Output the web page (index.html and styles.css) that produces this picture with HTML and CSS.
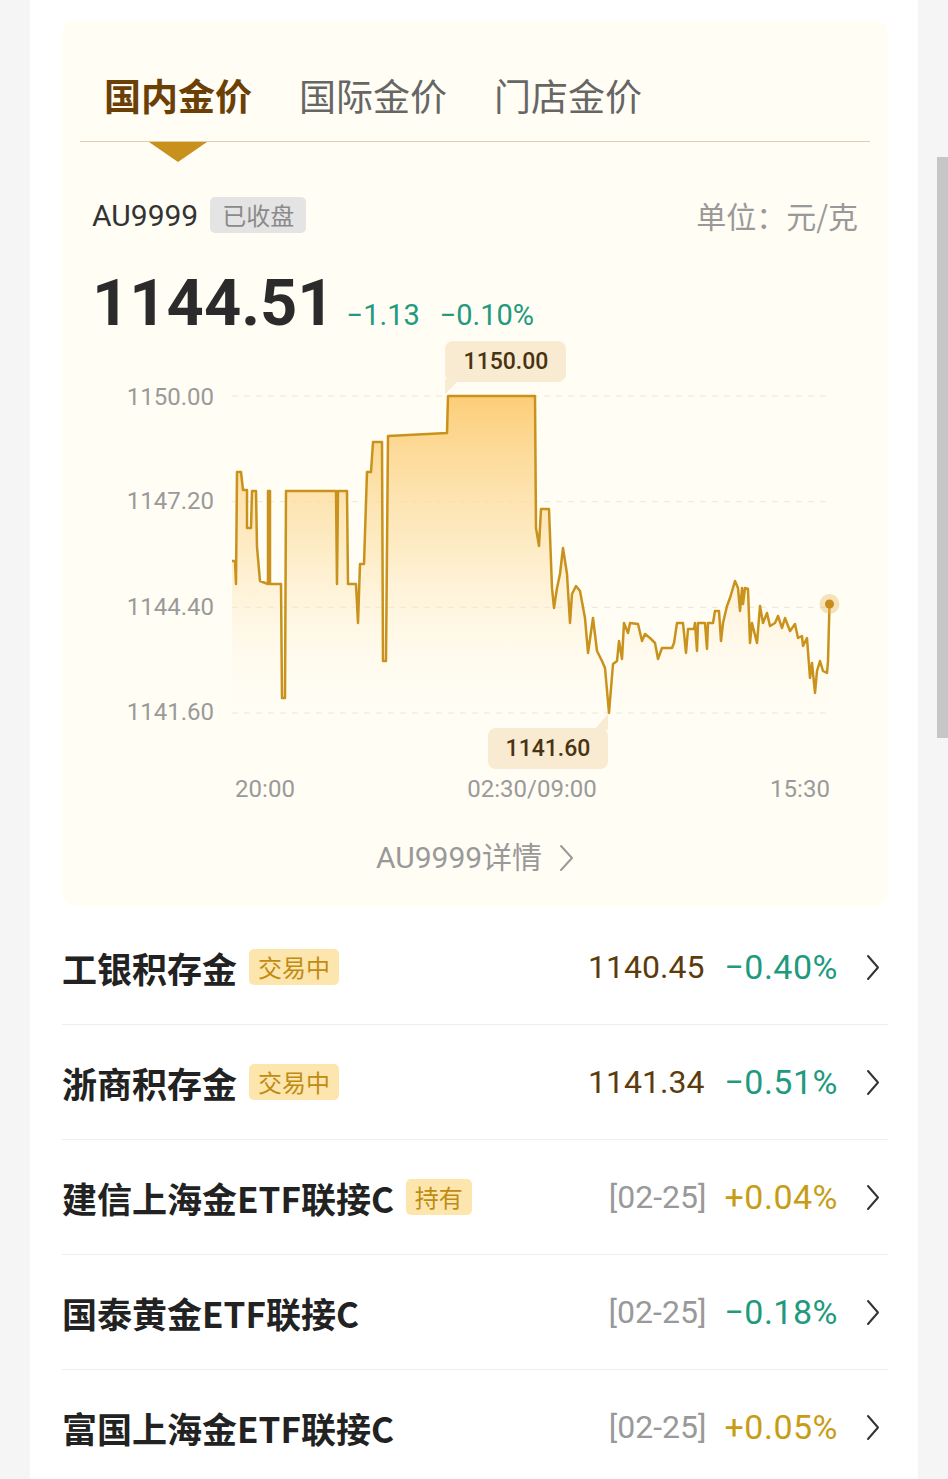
FILE: index.html
```html
<!DOCTYPE html>
<html lang="zh-CN">
<head>
    <meta charset="UTF-8">
    <meta name="viewport" content="width=device-width, initial-scale=1.0">
    <title>金价</title>
    <link rel="stylesheet" href="styles.css">
</head>
<body>
    <div class="scrollbar"></div>
    <div class="page">
        <section class="gold-panel">
            <div class="tabs">
                <span class="tab active">国内金价</span>
                <span class="tab">国际金价</span>
                <span class="tab">门店金价</span>
            </div>

            <div class="quote-head">
                <div class="quote-name">AU9999<span class="tag tag-closed">已收盘</span></div>
                <div class="unit">单位：元/克</div>
            </div>

            <div class="quote-price">
                <span class="price">1144.51</span>
                <span class="change">−1.13</span>
                <span class="change">−0.10%</span>
            </div>

            <!-- 分时图 -->
            <svg class="chart" viewBox="62 335 826 475">
                <defs>
                    <linearGradient id="area" x1="0" y1="395" x2="0" y2="712" gradientUnits="userSpaceOnUse">
                        <stop offset="0" stop-color="#fccb72" stop-opacity="0.95"/>
                        <stop offset="0.5" stop-color="#fde2ab" stop-opacity="0.6"/>
                        <stop offset="1" stop-color="#fff8ea" stop-opacity="0"/>
                    </linearGradient>
                </defs>

                <g class="grid">
                    <line x1="232" y1="395" x2="830" y2="395"/>
                    <line x1="232" y1="500.7" x2="830" y2="500.7"/>
                    <line x1="232" y1="606.3" x2="830" y2="606.3"/>
                    <line x1="232" y1="712" x2="830" y2="712"/>
                </g>

                <g class="axis-label">
                    <text x="214" y="403.5" text-anchor="end">1150.00</text>
                    <text x="214" y="507.5" text-anchor="end">1147.20</text>
                    <text x="214" y="613.5" text-anchor="end">1144.40</text>
                    <text x="214" y="718.5" text-anchor="end">1141.60</text>
                    <text x="265" y="796" text-anchor="middle">20:00</text>
                    <text x="532" y="796" text-anchor="middle">02:30/09:00</text>
                    <text x="800" y="796" text-anchor="middle">15:30</text>
                </g>

                <polygon class="area" points="232,560 235,560 236,583 237,471 241,471 243,489 247,489 247,527 251,527 252,490 256,490 257,546 260,580 268,583 268,490 270,490 270,583 281,583 282,697 285,697 286,490 336,490 337,583 338,490 347,490 348,583 356,583 358,622 360,563 364,563 367,471 371,471 373,441 382,441 383,660 386,660 388,435 447,432 448,395 535,395 536,527 539,545 541,508 549,508 552,587 554,607 557,587 560,573 563,547 567,573 570,622 572,593 576,585 580,590 585,617 588,652 593,617 597,650 602,660 605,667 609,712 613,663 617,660 619,640 622,658 624,622 628,632 630,622 638,623 642,640 645,633 650,637 655,642 658,658 662,647 672,647 674,642 677,622 683,622 686,652 688,628 694,628 695,622 697,650 698,622 705,622 707,648 708,622 713,622 715,610 719,610 721,640 723,622 727,605 730,597 735,580 738,587 740,610 742,587 743,603 745,587 748,588 750,642 752,622 757,642 760,605 763,622 767,612 770,625 775,622 778,615 782,627 785,617 790,630 795,623 798,637 802,635 803,645 807,637 810,677 812,662 815,692 817,670 820,660 823,670 827,672 828,660 829.5,603 829.5,712 232,712"/>
                <polyline class="line" points="232,560 235,560 236,583 237,471 241,471 243,489 247,489 247,527 251,527 252,490 256,490 257,546 260,580 268,583 268,490 270,490 270,583 281,583 282,697 285,697 286,490 336,490 337,583 338,490 347,490 348,583 356,583 358,622 360,563 364,563 367,471 371,471 373,441 382,441 383,660 386,660 388,435 447,432 448,395 535,395 536,527 539,545 541,508 549,508 552,587 554,607 557,587 560,573 563,547 567,573 570,622 572,593 576,585 580,590 585,617 588,652 593,617 597,650 602,660 605,667 609,712 613,663 617,660 619,640 622,658 624,622 628,632 630,622 638,623 642,640 645,633 650,637 655,642 658,658 662,647 672,647 674,642 677,622 683,622 686,652 688,628 694,628 695,622 697,650 698,622 705,622 707,648 708,622 713,622 715,610 719,610 721,640 723,622 727,605 730,597 735,580 738,587 740,610 742,587 743,603 745,587 748,588 750,642 752,622 757,642 760,605 763,622 767,612 770,625 775,622 778,615 782,627 785,617 790,630 795,623 798,637 802,635 803,645 807,637 810,677 812,662 815,692 817,670 820,660 823,670 827,672 828,660 829.5,603"/>

                <circle class="dot-halo" cx="829.5" cy="603" r="10"/>
                <circle class="dot" cx="829.5" cy="603" r="4.5"/>

                <!-- 最高 / 最低 提示 -->
                <g class="tip">
                    <path d="M445 378 L445 393 L458 380 Z"/>
                    <rect x="445" y="340" width="121" height="41" rx="8"/>
                    <text x="506" y="368" text-anchor="middle">1150.00</text>
                </g>
                <g class="tip">
                    <path d="M608 729 L608 713 L595 728 Z"/>
                    <rect x="488" y="727" width="120" height="41" rx="8"/>
                    <text x="548" y="755" text-anchor="middle">1141.60</text>
                </g>
            </svg>

            <div class="detail-link">
                <span>AU9999详情</span>
                <svg class="detail-arrow" viewBox="0 0 15 28"><path d="M2 2 L13 14 L2 26"/></svg>
            </div>
        </section>

        <ul class="fund-list">
            <li class="fund-row">
                <div class="fund-name">工银积存金<span class="tag tag-trading">交易中</span></div>
                <div class="fund-quote">
                    <span class="fund-value">1140.45</span>
                    <span class="pct down">−0.40%</span>
                    <svg class="chevron" viewBox="0 0 14 27"><path d="M2 2 L12 13.5 L2 25"/></svg>
                </div>
            </li>
            <li class="fund-row">
                <div class="fund-name">浙商积存金<span class="tag tag-trading">交易中</span></div>
                <div class="fund-quote">
                    <span class="fund-value">1141.34</span>
                    <span class="pct down">−0.51%</span>
                    <svg class="chevron" viewBox="0 0 14 27"><path d="M2 2 L12 13.5 L2 25"/></svg>
                </div>
            </li>
            <li class="fund-row">
                <div class="fund-name">建信上海金ETF联接C<span class="tag tag-trading">持有</span></div>
                <div class="fund-quote">
                    <span class="fund-date">[02-25]</span>
                    <span class="pct up">+0.04%</span>
                    <svg class="chevron" viewBox="0 0 14 27"><path d="M2 2 L12 13.5 L2 25"/></svg>
                </div>
            </li>
            <li class="fund-row">
                <div class="fund-name">国泰黄金ETF联接C</div>
                <div class="fund-quote">
                    <span class="fund-date">[02-25]</span>
                    <span class="pct down">−0.18%</span>
                    <svg class="chevron" viewBox="0 0 14 27"><path d="M2 2 L12 13.5 L2 25"/></svg>
                </div>
            </li>
            <li class="fund-row">
                <div class="fund-name">富国上海金ETF联接C</div>
                <div class="fund-quote">
                    <span class="fund-date">[02-25]</span>
                    <span class="pct up">+0.05%</span>
                    <svg class="chevron" viewBox="0 0 14 27"><path d="M2 2 L12 13.5 L2 25"/></svg>
                </div>
            </li>
        </ul>
    </div>
</body>
</html>
```

FILE: styles.css
```css
body {
    margin: 0;
    background-color: #f5f5f5;
    font-family: Roboto, "Noto Sans CJK SC", sans-serif;
}

.page {
    width: 888px;
    min-height: 1479px;
    margin-left: 30px;
    padding: 20px 30px 0 32px;
    box-sizing: border-box;
    background: #fff;
}

.scrollbar {
    position: fixed;
    top: 157px;
    right: 0;
    width: 11px;
    height: 581px;
    background: #c6c6c6;
}

/* 金价面板 */
.gold-panel {
    background: #fffdf4;
    border-radius: 14px;
    padding: 0 30px 28px;
}

.tabs {
    display: flex;
    gap: 47px;
    margin: 0 -12px;
    padding: 53px 0 24px 24px;
    border-bottom: 1px solid #dccfab;
}

.tab {
    position: relative;
    font-family: "Noto Sans CJK SC", sans-serif;
    font-size: 37px;
    line-height: 44px;
    color: #666;
}

.tab.active {
    color: #6b4006;
    font-weight: 700;
}

.tab.active::after {
    content: "";
    position: absolute;
    left: 50%;
    top: calc(100% + 25px);
    margin-left: -29px;
    border-left: 29px solid transparent;
    border-right: 29px solid transparent;
    border-top: 20px solid #c8901c;
}

.quote-head {
    display: flex;
    justify-content: space-between;
    align-items: center;
    height: 36px;
    margin-top: 55px;
}

.quote-name {
    display: flex;
    align-items: center;
    gap: 12px;
    font-size: 30px;
    color: #333;
}

.unit {
    font-family: "Noto Sans CJK SC", sans-serif;
    font-size: 30px;
    color: #999;
}

.tag {
    font-family: "Noto Sans CJK SC", sans-serif;
    font-size: 24px;
    font-weight: 400;
    line-height: 36px;
    padding: 0 9px;
    border-radius: 5px;
}

.tag-closed {
    padding: 0 12px;
    background: #e4e4e4;
    color: #8a8a8a;
}

.tag-trading {
    background: #fde5ae;
    color: #c08b12;
}

.quote-price {
    display: flex;
    align-items: baseline;
    gap: 20px;
    height: 65px;
    margin-top: 38px;
}

.price {
    font-size: 65px;
    font-weight: 700;
    line-height: 65px;
    color: #2b2b2b;
    margin-right: -8px;
}

.change {
    font-size: 29px;
    color: #229a7e;
}

/* 图表 */
.chart {
    display: block;
    width: 826px;
    height: 475px;
    margin: 0 -30px;
}

.grid line {
    stroke: #ece6d4;
    stroke-width: 1;
    stroke-dasharray: 6 6;
}

.axis-label {
    font-family: Roboto, sans-serif;
    font-size: 24px;
    fill: #9a9a9a;
}

.area {
    fill: url(#area);
}

.line {
    fill: none;
    stroke: #c8921c;
    stroke-width: 2.5;
    stroke-linejoin: round;
}

.dot-halo {
    fill: #e7b85e;
    opacity: 0.4;
}

.dot {
    fill: #c98b1a;
}

.tip rect,
.tip path {
    fill: #f8ebd1;
}

.tip text {
    font-family: Roboto, sans-serif;
    font-size: 23px;
    font-weight: 500;
    fill: #4a3312;
}

.detail-link {
    display: flex;
    justify-content: center;
    align-items: center;
    gap: 17px;
    margin-top: 27px;
    font-size: 30px;
    line-height: 40px;
    color: #999;
}

.detail-arrow {
    width: 15px;
    height: 28px;
}

.detail-arrow path,
.chevron path {
    fill: none;
    stroke-width: 2;
    stroke-linecap: round;
    stroke-linejoin: round;
}

.detail-arrow path {
    stroke: #9a9a9a;
}

/* 列表 */
.fund-list {
    list-style: none;
    margin: 4px 0 0;
    padding: 0;
}

.fund-row {
    display: flex;
    justify-content: space-between;
    align-items: center;
    height: 115px;
    box-sizing: border-box;
    padding-right: 8px;
    border-bottom: 1px solid #eeeeee;
}

.fund-name {
    display: flex;
    align-items: center;
    gap: 12px;
    font-family: "Noto Sans CJK SC", sans-serif;
    font-size: 35px;
    font-weight: 700;
    color: #222;
}

.fund-quote {
    display: flex;
    align-items: center;
    font-size: 32px;
}

.fund-value {
    margin-right: 20px;
    color: #5c3b0d;
}

.fund-date {
    margin-right: 18px;
    color: #999;
}

.pct {
    font-size: 34px;
    letter-spacing: 0.5px;
}

.pct.down {
    color: #1f9a7e;
}

.pct.up {
    color: #c79d18;
}

.chevron {
    width: 14px;
    height: 27px;
    margin-left: 28px;
}

.chevron path {
    stroke: #333;
}
```
